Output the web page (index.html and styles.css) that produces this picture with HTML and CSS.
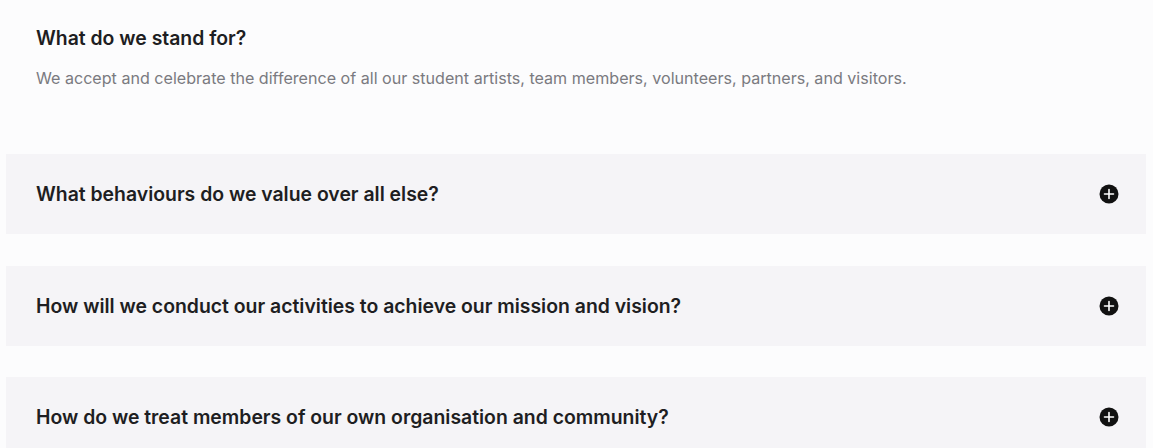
FILE: index.html
```html
<!DOCTYPE html>
<html lang="en">
<head>
<meta charset="utf-8">
<link rel="stylesheet" href="styles.css">
</head>
<body>
<main class="page">
  <section class="intro">
    <h2 class="intro-title">What do we stand for?</h2>
    <p class="intro-text">We accept and celebrate the difference of all our student artists, team members, volunteers, partners, and visitors.</p>
  </section>
  <div class="accordion">
    <div class="item">
      <span class="item-title">What behaviours do we value over all else?</span>
      <svg class="icon" viewBox="0 0 20 20" width="20" height="20"><circle cx="10" cy="10" r="9.5" fill="#111"/><path d="M10 5.5v9M5.5 10h9" stroke="#fff" stroke-width="1.6" stroke-linecap="round"/></svg>
    </div>
    <div class="item">
      <span class="item-title">How will we conduct our activities to achieve our mission and vision?</span>
      <svg class="icon" viewBox="0 0 20 20" width="20" height="20"><circle cx="10" cy="10" r="9.5" fill="#111"/><path d="M10 5.5v9M5.5 10h9" stroke="#fff" stroke-width="1.6" stroke-linecap="round"/></svg>
    </div>
    <div class="item">
      <span class="item-title">How do we treat members of our own organisation and community?</span>
      <svg class="icon" viewBox="0 0 20 20" width="20" height="20"><circle cx="10" cy="10" r="9.5" fill="#111"/><path d="M10 5.5v9M5.5 10h9" stroke="#fff" stroke-width="1.6" stroke-linecap="round"/></svg>
    </div>
  </div>
</main>
</body>
</html>
```
FILE: styles.css
```css
html, body {
  margin: 0;
  padding: 0;
  background: #fcfcfd;
}
body {
  font-family: Inter, "Noto Sans", sans-serif;
  color: #1e1e22;
}
.page {
  padding: 0 7px 0 6px;
}
.intro {
  padding: 26px 30px 0;
  height: 128px;
  box-sizing: border-box;
}
.intro-title {
  margin: 0;
  font-size: 19.4px;
  font-weight: 600;
  line-height: 24px;
}
.intro-text {
  margin: 18px 0 0;
  font-size: 16.1px;
  font-weight: 400;
  color: #7a7a80;
  line-height: 20px;
}
.accordion {
  display: flex;
  flex-direction: column;
  gap: 31.5px;
  padding-top: 26px;
}
.item {
  background: #f5f4f7;
  height: 80px;
  display: flex;
  align-items: center;
  justify-content: space-between;
  padding: 0 27px 0 30px;
}
.item-title {
  font-size: 19.4px;
  font-weight: 600;
}
.icon {
  display: block;
}
```
